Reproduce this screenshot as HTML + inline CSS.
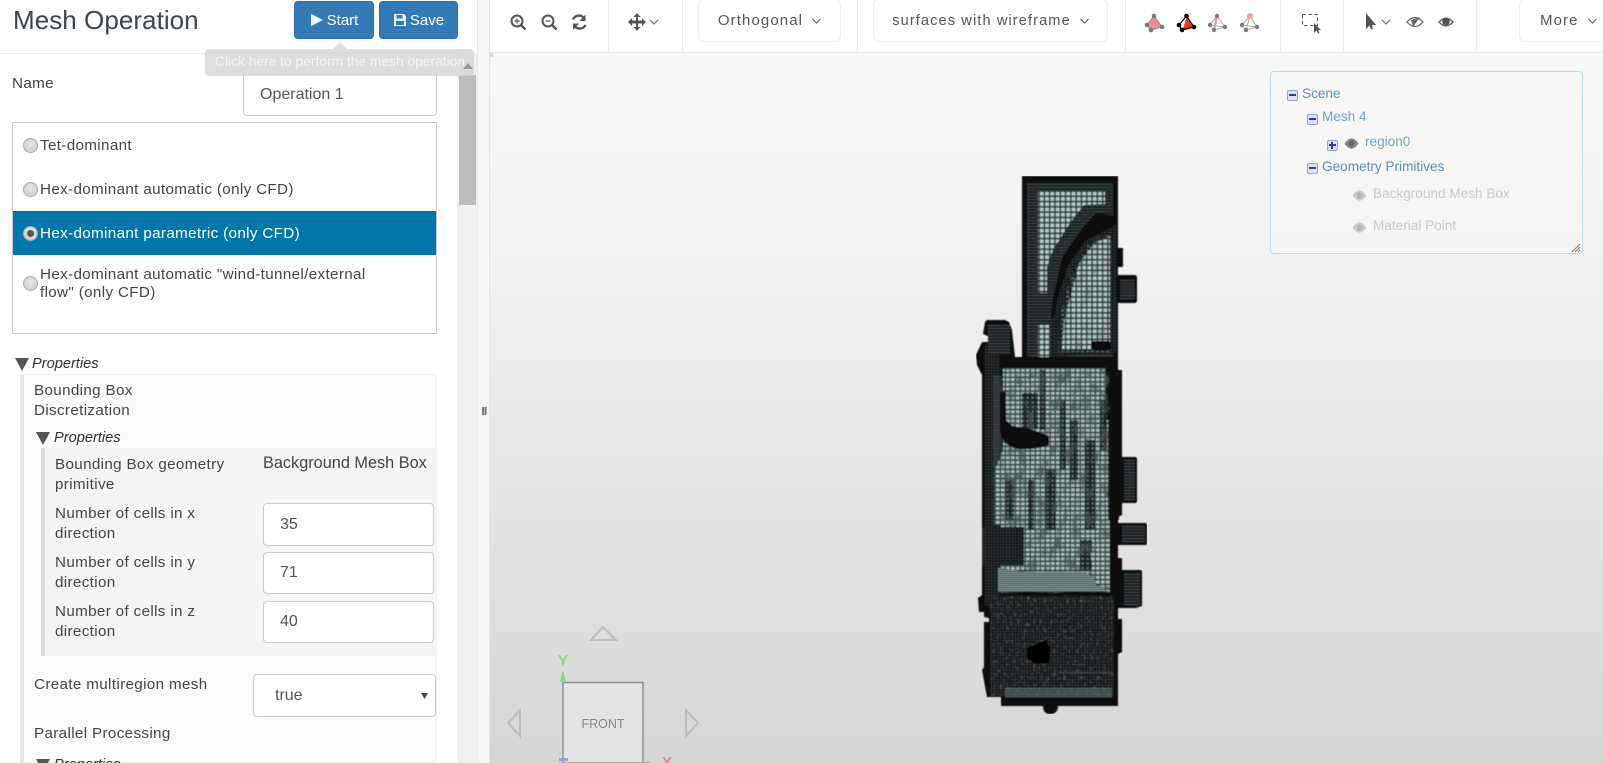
<!DOCTYPE html>
<html><head><meta charset="utf-8"><title>Mesh Operation</title>
<style>
html,body{margin:0;padding:0;width:1603px;height:763px;overflow:hidden;background:#fff}
body{font-family:"Liberation Sans",sans-serif;color:#444;font-size:14.6px;position:relative}
.a{position:absolute;white-space:nowrap}
.t{position:absolute;white-space:nowrap;line-height:20px;font-size:15.2px;letter-spacing:.35px}
.t.i{font-size:14.6px;letter-spacing:0;font-style:italic;color:#333}
.t.tr{font-size:13.6px;letter-spacing:0}
.box{position:absolute;box-sizing:border-box}
.inp{position:absolute;box-sizing:border-box;background:#fff;border:1px solid #ccc;border-radius:4px;color:#555;font-size:16px;padding-left:16px;display:flex;align-items:center}
.btn{position:absolute;box-sizing:border-box;background:#337ab7;border:1px solid #2e6da4;border-radius:4px;color:#fff;font-size:15px;display:flex;align-items:center;justify-content:center;gap:3px}
.tb{position:absolute;box-sizing:border-box;top:-1px;height:43px;border:1px solid #eee;border-radius:6px;background:#fff;color:#555;font-size:15px;letter-spacing:1.1px;display:flex;align-items:center;justify-content:center;gap:9px}
.sep{position:absolute;top:0;width:1px;height:53px;background:#ececec}
.rad{position:absolute;box-sizing:border-box;width:15px;height:15px;border-radius:50%;background:radial-gradient(circle at 50% 40%,#e6e6e6,#c9c9c9);border:1px solid #aaa}
.tri{position:absolute;width:0;height:0;border-left:7px solid transparent;border-right:7px solid transparent;border-top:13px solid #555}
.pm{position:absolute;box-sizing:border-box;width:11px;height:11px;border:1.5px solid #9a9edb;border-radius:2px;background:#dfe1f6}
.pm:after{content:"";position:absolute;left:1px;right:1px;top:3px;height:1.5px;background:#3333bb}
.plus:before{content:"";position:absolute;top:1px;bottom:1px;left:3px;width:1.5px;background:#3333bb}
svg{position:absolute;overflow:visible}
</style></head><body>

<!-- viewport -->
<div class="box" style="left:490px;top:53px;width:1113px;height:710px;background:linear-gradient(#f9f9f9,#f1f1f1 30%,#e3e3e3 65%,#d6d6d6)"></div>

<!-- mesh -->
<svg style="left:0;top:0" width="1603" height="763" viewBox="0 0 1603 763">
<defs>
<pattern id="g1" width="5.3" height="5.3" patternUnits="userSpaceOnUse"><rect width="5.3" height="5.3" fill="#2b3233"/><rect x="1" y="1" width="3.8" height="3.6" fill="#b5cccc"/></pattern>
<pattern id="g2" width="5" height="4.6" patternUnits="userSpaceOnUse"><rect width="5" height="4.6" fill="#3a4444"/><rect x="1" y="1" width="3.5" height="2.8" fill="#a9c2c2"/></pattern>
<pattern id="g3" width="2" height="3" patternUnits="userSpaceOnUse"><rect width="2" height="3" fill="#151a1a"/><rect y="1" width="2" height="1" fill="#3a4646"/></pattern>
<pattern id="g4" width="3" height="3" patternUnits="userSpaceOnUse"><rect width="3" height="3" fill="#161a1a"/><rect x="1" y="1" width="1" height="1" fill="#3c4646"/></pattern>
<pattern id="g5" width="3" height="2" patternUnits="userSpaceOnUse"><rect width="3" height="2" fill="#2e3838"/><rect y="0" width="3" height="1" fill="#8aa2a2"/></pattern>
<pattern id="g6" width="5" height="4.6" patternUnits="userSpaceOnUse"><rect width="5" height="4.6" fill="#1c2222"/><rect x="1.5" y="1.2" width="2.4" height="2" fill="#5f7070"/></pattern>
<filter id="bl" x="0" y="0" width="1" height="1" filterUnits="objectBoundingBox"><feGaussianBlur stdDeviation=".55"/></filter>
<filter id="noise" x="0" y="0" width="1" height="1"><feTurbulence type="fractalNoise" baseFrequency=".11 .07" numOctaves="3" seed="7"/><feColorMatrix type="matrix" values="0 0 0 0 .07  0 0 0 0 .09  0 0 0 0 .09  4 0 0 0 -1.95"/></filter>
<filter id="noise2" x="0" y="0" width="1" height="1"><feTurbulence type="fractalNoise" baseFrequency=".3" numOctaves="2" seed="3"/><feColorMatrix type="matrix" values="0 0 0 0 .22  0 0 0 0 .25  0 0 0 0 .25  3 0 0 0 -1.6"/></filter>
</defs>
<g filter="url(#bl)">
<path fill="#0e1111" d="M1022 176H1118V248H1123V267H1118V275H1135Q1137 275 1137 278V301Q1137 303 1134 303H1118V370H1122V457H1135Q1137 457 1137 459V501Q1137 503 1135 503H1122V515L1118 517V523H1145Q1147 523 1147 525V543Q1147 545 1145 545H1118V558H1122V570H1140Q1142 570 1142 572V606L1136 608H1118V619H1122V652L1118 654V706H1058Q1058 714 1050 714Q1043 714 1043 706H1001V697H987L982 670L984 667V622H989V618L984 617 V612H979L978 598L982 595V375L977 365 976 355 982 342H988L990 337 983 334 985 322 987 320H1005L1009 322 1012 330 1015 357H1022Z"/>
<!-- tower -->
<rect x="1027" y="182" width="86" height="175" fill="url(#g3)"/>
<path fill="url(#g1)" d="M1038 192H1105V204L1084 205 1070 223 1053 250 1047 267V293H1038Z"/>
<path fill="url(#g1)" d="M1038 325H1050V357H1038Z"/>
<!-- upper lit region -->
<path fill="url(#g4)" d="M1050 357L1052 305 1062 262 1082 232 1095 220 1117 216V352Z"/>
<path fill="url(#g6)" d="M1058 352L1060 315 1070 280 1088 245 1110 234V352Z"/>
<path fill="url(#g1)" d="M1062 349L1064 320 1072 290 1079 264 1093 244 1110 236V349Z"/>
<rect x="1060" y="236" width="50" height="116" fill="#000" filter="url(#noise)" opacity=".3"/>
<path fill="#0a0d0d" d="M1118 216L1096 213 1080 231 1062 258 1053 298 1051 318 1054 318 1058 296 1068 266 1085 241 1104 231 1118 224Z"/>
<rect x="1091" y="341" width="20" height="9" rx="3" fill="#0a0d0d"/>
<!-- left side mesh -->
<rect x="985" y="345" width="15" height="260" fill="url(#g4)"/>
<rect x="993" y="375" width="9" height="150" fill="url(#g5)" opacity=".3"/>
<!-- body lit -->
<path fill="url(#g2)" d="M1003 368H1106V420L1110 420V592H1000V525H995V470L1003 450Z"/>
<!-- darker streaks -->
<g fill="url(#g6)">
<rect x="1022" y="393" width="16" height="36"/><rect x="1040" y="370" width="5" height="60"/>
<rect x="1060" y="400" width="6" height="70"/><rect x="1070" y="420" width="8" height="60"/>
<rect x="1085" y="440" width="10" height="90"/><rect x="1100" y="400" width="7" height="50"/>
<rect x="1046" y="470" width="10" height="60"/><rect x="1028" y="480" width="6" height="50"/>
<rect x="1006" y="480" width="8" height="40"/><rect x="1080" y="540" width="12" height="30"/>
</g>
<rect x="1000" y="368" width="110" height="225" fill="#000" filter="url(#noise)" opacity=".8"/>
<path fill="#0d1010" d="M1000 392V432Q1003 446 1018 449 1036 450 1049 445V436L1030 429 1012 426 1006 420V392Z"/>
<rect x="1100" y="360" width="18" height="8" fill="#0d1010"/>
<rect x="1108" y="410" width="11" height="110" fill="#0c0f0f" opacity=".85"/>
<rect x="982" y="527" width="42" height="38" fill="url(#g4)"/>
<!-- lit lower strip -->
<path fill="url(#g5)" d="M998 568L1030 572H1086L1100 585 1108 592H998Z"/>
<path fill="url(#g2)" d="M1090 553H1106V585H1096Z"/>
<!-- lower block -->
<rect x="990" y="596" width="124" height="100" fill="url(#g4)"/>
<rect x="990" y="596" width="124" height="100" fill="#000" filter="url(#noise2)" opacity=".55"/>
<path fill="#040606" d="M1027 648L1046 640 1050 648 1049 663 1036 664 1027 658Z"/>
<rect x="1058" y="672" width="55" height="1" fill="#3a4444"/>
<path fill="url(#g5)" d="M1005 688H1112V698H1005Z" opacity=".55"/>
<path fill="url(#g3)" d="M1120 280H1135V300H1120ZM1124 460H1135V500H1124ZM1122 525H1145V543H1122ZM1124 572H1140V606H1124ZM988 325H1010V355H988Z"/>
</g>
</svg>

<!-- tree panel -->
<div class="box" style="left:1270px;top:71px;width:313px;height:183px;border:1px solid #b9dde9;border-radius:4px;background:rgba(248,248,248,.55)"></div>
<div class="pm" style="left:1287px;top:90px"></div><div class="t tr" style="left:1302px;top:84px;color:#5a93b0">Scene</div>
<div class="pm" style="left:1307px;top:114px"></div><div class="t tr" style="left:1322px;top:107px;color:#6ba7c7">Mesh 4</div>
<div class="pm plus" style="left:1327px;top:140px"></div>
<svg style="left:1344px;top:138px" width="15" height="11" viewBox="0 0 15 11"><path fill="#888" d="M.5 5.5Q7.500-5 14.500 5.500 7.500 16 .5 5.500Z"/><circle cx="7.500" cy="5.500" r="3" fill="#666"/></svg>
<div class="t tr" style="left:1365px;top:132px;color:#6ba7c7">region0</div>
<div class="pm" style="left:1307px;top:163px"></div><div class="t tr" style="left:1322px;top:157px;color:#5a8fae">Geometry Primitives</div>
<svg style="left:1352px;top:190px" width="15" height="11" viewBox="0 0 15 11"><path fill="#ccc" d="M.5 5.5Q7.500-5 14.500 5.500 7.500 16 .5 5.500Z"/><circle cx="7.500" cy="5.500" r="3" fill="#b5b5b5"/></svg>
<div class="t tr" style="left:1373px;top:184px;color:#c8c8c8">Background Mesh Box</div>
<svg style="left:1352px;top:222px" width="15" height="11" viewBox="0 0 15 11"><path fill="#ccc" d="M.5 5.5Q7.500-5 14.500 5.500 7.500 16 .5 5.500Z"/><circle cx="7.500" cy="5.500" r="3" fill="#b5b5b5"/></svg>
<div class="t tr" style="left:1373px;top:216px;color:#c8c8c8">Material Point</div>
<svg style="left:1571px;top:243px" width="10" height="10"><path stroke="#777" d="M1 9L9 1M4 9L9 4M7 9L9 7" fill="none"/></svg>

<!-- gizmo -->
<svg style="left:490px;top:610px" width="230" height="153" viewBox="0 0 230 153">
<path d="M101 30L113 17 126 30Z" fill="none" stroke="#bdbdbd" stroke-width="2"/>
<path d="M30 100V126L18 113Z" fill="none" stroke="#bdbdbd" stroke-width="2"/>
<path d="M196 100V126L208 113Z" fill="none" stroke="#bdbdbd" stroke-width="2"/>
<rect x="73" y="72.500" width="80" height="90" fill="#e4e4e4" stroke="#929292" stroke-width="1.500"/>
<path d="M73 72V153" stroke="#8ea58e" stroke-width="1.500"/>
<path d="M73 60L70 72H76Z" fill="#85dd85"/>
<path d="M73 153H160" stroke="#b58585" stroke-width="1.500"/>
<rect x="69" y="148" width="9" height="3" fill="#9a9ae0"/>
<text x="73" y="56" text-anchor="middle" font-family="Liberation Sans" font-size="16" font-weight="bold" fill="#85dd85">Y</text>
<text x="177" y="158" text-anchor="middle" font-family="Liberation Sans" font-size="16" font-weight="bold" fill="#ee8888">X</text>
<text x="113" y="118" text-anchor="middle" font-family="Liberation Sans" font-size="12.500" fill="#888">FRONT</text>
</svg>

<!-- toolbar -->
<div class="box" style="left:490px;top:0;width:1113px;height:53px;background:#fff;border-bottom:1px solid #e9e9e9"></div>
<div class="sep" style="left:608px"></div><div class="sep" style="left:682px"></div><div class="sep" style="left:857px"></div>
<div class="sep" style="left:1125px"></div><div class="sep" style="left:1280px"></div><div class="sep" style="left:1343px"></div><div class="sep" style="left:1476px"></div>
<svg style="left:0;top:0" width="1603" height="53" viewBox="0 0 1603 53">
<g fill="none" stroke="#555" stroke-width="2">
<circle cx="517" cy="21" r="5.500"/><path d="M521 25L525.500 29.500" stroke-width="2.500"/><path d="M514.500 21H519.500M517 18.500V23.500" stroke-width="1.200"/>
<circle cx="548" cy="21" r="5.500"/><path d="M552 25L556.500 29.500" stroke-width="2.500"/><path d="M545.500 21H550.500" stroke-width="1.200"/>
<path d="M573 19.500A6.500 6.500 0 0 1 584 18M585.500 25A6.500 6.500 0 0 1 574.500 26" stroke-width="2.400"/>
</g>
<path fill="#555" d="M585.500 14.500V21H579.500ZM573 30V23.500H579Z"/>
<path fill="#555" d="M628 22L632 18V20.500H636V17H633.500L637 13 640.500 17H638V20.500H642V18L646 22 642 26V23.500H638V27H640.500L637 31 633.500 27H636V23.500H632V26Z"/>
<path d="M650 20L654 24 658 20" fill="none" stroke="#666" stroke-width="1"/>
<!-- tetrahedra -->
<g><path d="M1154 16L1147 25 1151 30 1162 27Z" fill="#f58f85" stroke="#888"/><path d="M1154 16L1151 30" stroke="#c99"/><g fill="#7a7a7a"><circle cx="1154" cy="16" r="2.300"/><circle cx="1147" cy="25" r="2.300"/><circle cx="1151" cy="30" r="2.300"/><circle cx="1162" cy="27" r="2.300"/></g></g>
<g><path d="M1186.500 16L1194 27 1182 30Z" fill="#ee3820"/><path d="M1186.500 16L1179 25 1182 30 1194 27Z" fill="none" stroke="#000" stroke-width="1.200"/><path d="M1186.500 16L1182 30" stroke="#fff"/><circle cx="1186.500" cy="16" r="2.300"/><circle cx="1179" cy="25" r="2.300"/><circle cx="1182" cy="30" r="2.300"/><circle cx="1194" cy="27" r="2.300"/></g>
<g fill="none" stroke="#aaa"><path d="M1217 16L1210 25 1214 30 1225 27ZM1210 25L1225 27"/><path d="M1217 16L1214 30" stroke="#f58f85" stroke-width="2"/><g fill="#7a7a7a" stroke="none"><circle cx="1217" cy="16" r="2.200"/><circle cx="1210" cy="25" r="2.200"/><circle cx="1214" cy="30" r="2.200"/><circle cx="1225" cy="27" r="2.200"/></g></g>
<g fill="none" stroke="#aaa"><path d="M1250 16L1242 25 1246 30 1257 27ZM1242 25L1257 27M1250 16L1246 30"/><g fill="#7a7a7a" stroke="none"><circle cx="1242" cy="25" r="2.200"/><circle cx="1246" cy="30" r="2.200"/><circle cx="1257" cy="27" r="2.200"/></g><circle cx="1250" cy="16" r="2.900" fill="#f79a90" stroke="none"/></g>
<rect x="1302.500" y="14.500" width="15" height="11" fill="none" stroke="#555" stroke-dasharray="3.500 2.500"/>
<path fill="#555" d="M1314 23V33L1316.500 30.500 1318 33.500 1319.500 33 1318 30H1321Z"/>
<path fill="#555" d="M1366 13V29L1369.500 25.500 1371 29.500 1373 29 1372 25H1376Z"/>
<path d="M1382 20L1386 24 1390 20" fill="none" stroke="#666"/>
<path d="M1407 22Q1415 13 1423 22 1415 31 1407 22Z" fill="none" stroke="#666" stroke-width="1.300"/><path d="M1411 20L1420 17 1413 27Z" fill="#666"/>
<path fill="#666" d="M1438 22Q1446 13 1454 22 1446 31 1438 22ZM1440 22Q1446 28 1452 22 1446 16 1440 22Z"/><circle cx="1446" cy="21.500" r="3.800" fill="#555"/>
</svg>
<div class="tb" style="left:698px;width:143px">Orthogonal <svg style="position:static" width="9" height="6"><path d="M.5 1L4.500 5 8.500 1" fill="none" stroke="#555"/></svg></div>
<div class="tb" style="left:873px;width:235px;font-size:14.600px">surfaces with wireframe <svg style="position:static" width="9" height="6"><path d="M.5 1L4.500 5 8.500 1" fill="none" stroke="#555"/></svg></div>
<div class="tb" style="left:1519px;width:130px;justify-content:flex-start;padding-left:20px">More <svg style="position:static" width="9" height="6"><path d="M.5 1L4.500 5 8.500 1" fill="none" stroke="#555"/></svg></div>

<!-- splitter column -->
<div class="box" style="left:477px;top:0;width:13px;height:763px;background:#f7f7f7;border-left:1px solid #e6e6e6;border-right:1px solid #e6e6e6"></div>
<div class="box" style="left:482px;top:407px;width:1.500px;height:8px;background:#777;box-shadow:2.500px 0 0 #777"></div>
<div class="box" style="left:490px;top:53px;width:3px;height:4px;background:#ddd"></div>

<!-- left panel -->
<div class="box" style="left:0;top:53px;width:477px;height:1px;background:#ececec"></div>
<div class="a" style="left:13px;top:2px;font-size:26px;line-height:36px;color:#3c4650;letter-spacing:.05px">Mesh Operation</div>
<div class="btn" style="left:294px;top:1px;width:80px;height:38px"><svg style="position:static" width="14" height="14"><path fill="#eaf3ff" d="M1 1L13 7 1 13Z"/></svg>Start</div>
<div class="btn" style="left:379px;top:1px;width:79px;height:38px"><svg style="position:static" width="14" height="14" viewBox="0 0 14 14"><path fill="#e3eefb" fill-rule="evenodd" d="M1 1H11L13 3V13H1ZM3.500 2V5.500H9.500V2ZM3 8V12H11V8Z"/></svg>Save</div>

<div class="box" style="left:457px;top:53px;width:20px;height:710px;background:#f1f1f1"></div>
<div class="box" style="left:459px;top:75px;width:17px;height:130px;background:#bdbdbd"></div>

<div class="t" style="left:12px;top:74px">Name</div>
<div class="inp" style="left:243px;top:73px;width:194px;height:43px">Operation 1</div>

<div class="box" style="left:12px;top:122px;width:425px;height:212px;background:#fff;border:1px solid #c8c8c8"></div>
<div class="box" style="left:13px;top:211px;width:423px;height:44px;background:#0077aa"></div>
<div class="rad" style="left:23px;top:138px"></div><div class="t" style="left:40px;top:136px">Tet-dominant</div>
<div class="rad" style="left:23px;top:182px"></div><div class="t" style="left:40px;top:180px">Hex-dominant automatic (only CFD)</div>
<div class="rad" style="left:23px;top:226px"></div><div class="box" style="left:27px;top:230px;width:7px;height:7px;border-radius:50%;background:#555"></div><div class="t" style="left:40px;top:224px;color:#fff">Hex-dominant parametric (only CFD)</div>
<div class="rad" style="left:23px;top:276px"></div><div class="t" style="left:40px;top:266px;line-height:18px">Hex-dominant automatic "wind-tunnel/external<br>flow" (only CFD)</div>

<div class="tri" style="left:15px;top:358px"></div><div class="t i" style="left:32px;top:354px">Properties</div>
<div class="box" style="left:20px;top:374px;width:417px;height:389px;background:#fbfbfb;border:1px solid #f0f0f0;border-left:4px solid #e7e7e7"></div>
<div class="t" style="left:34px;top:381px">Bounding Box</div><div class="t" style="left:34px;top:401px">Discretization</div>
<div class="tri" style="left:36px;top:432px"></div><div class="t i" style="left:54px;top:428px">Properties</div>
<div class="box" style="left:41px;top:448px;width:394px;height:208px;background:#f5f5f5;border-left:4px solid #dcdcdc"></div>
<div class="t" style="left:55px;top:455px">Bounding Box geometry</div><div class="t" style="left:55px;top:475px">primitive</div>
<div class="t" style="left:263px;top:453px;font-size:16.300px;letter-spacing:0">Background Mesh Box</div>
<div class="t" style="left:55px;top:504px">Number of cells in x</div><div class="t" style="left:55px;top:524px">direction</div>
<div class="inp" style="left:263px;top:503px;width:171px;height:43px">35</div>
<div class="t" style="left:55px;top:553px">Number of cells in y</div><div class="t" style="left:55px;top:573px">direction</div>
<div class="inp" style="left:263px;top:552px;width:171px;height:42px">71</div>
<div class="t" style="left:55px;top:602px">Number of cells in z</div><div class="t" style="left:55px;top:622px">direction</div>
<div class="inp" style="left:263px;top:601px;width:171px;height:42px">40</div>
<div class="t" style="left:34px;top:675px">Create multiregion mesh</div>
<div class="inp" style="left:253px;top:674px;width:183px;height:43px;padding-left:21px">true</div>
<svg style="left:420px;top:692px" width="9" height="8"><path fill="#444" d="M1 1H8L4.500 7Z"/></svg>
<div class="t" style="left:34px;top:724px">Parallel Processing</div>
<div class="tri" style="left:36px;top:759px"></div><div class="t i" style="left:54px;top:755px">Properties</div>

<!-- tooltip -->
<div class="box" style="left:205px;top:49px;width:269px;height:27px;background:rgba(214,214,214,.82);border-radius:4px"></div>
<svg style="left:333px;top:42px" width="14" height="7"><path fill="#e0e0e0" d="M0 7L7 0 14 7Z"/></svg>
<div class="a" style="left:215px;top:52px;line-height:20px;font-size:13.800px;color:#f6f6f6">Click here to perform the mesh operation</div>
<svg style="left:463px;top:63px" width="10" height="6"><path fill="#9a9a9a" d="M0 6L5 0 10 6Z"/></svg>

</body></html>
